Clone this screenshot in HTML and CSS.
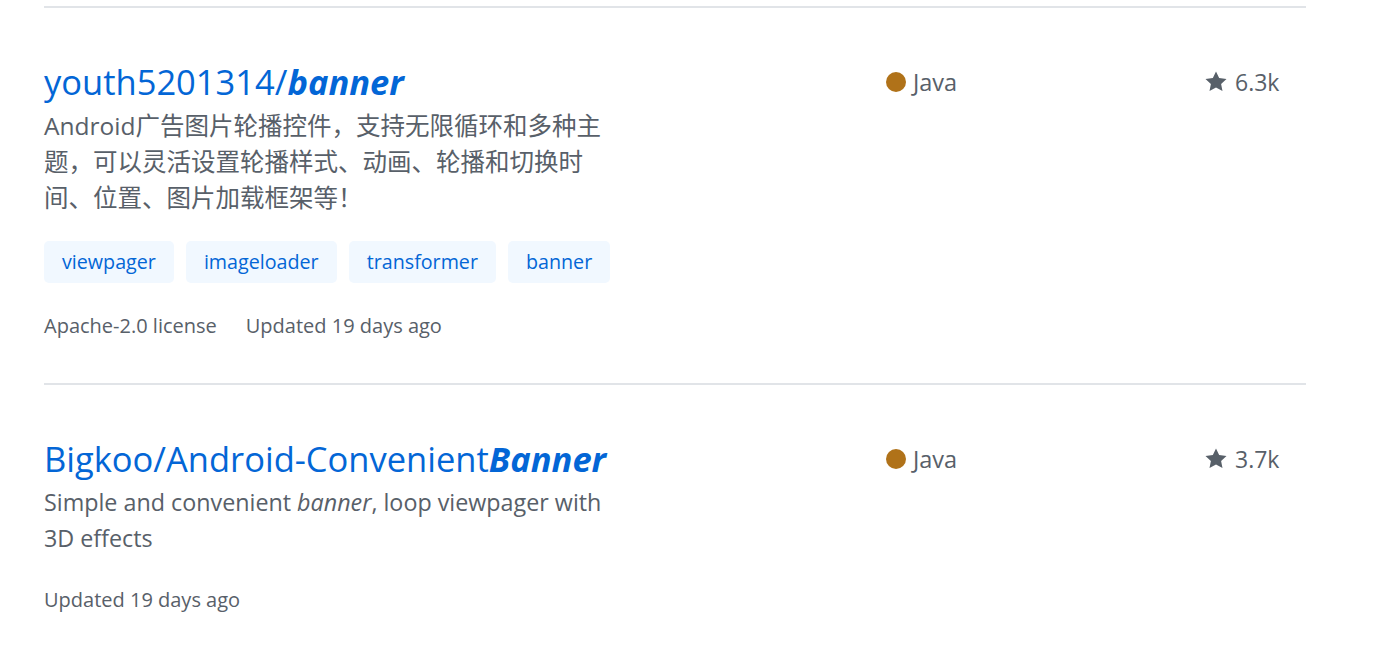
FILE: index.html
```html
<!DOCTYPE html>
<html lang="en">
  <head>
    <meta charset="UTF-8" />
    <meta name="viewport" content="width=device-width, initial-scale=1.0" />
    <title>Search results</title>
    <link rel="stylesheet" href="styles.css">
  </head>
  <body>
    <ul class="repo-list">
      <!-- youth5201314/banner -->
      <li class="repo-item">
        <div class="repo-main">
          <a class="repo-title" href="#">youth5201314/<em>banner</em></a>
          <p class="repo-desc zh" lang="zh">Android广告图片轮播控件，支持无限循环和多种主题，可以灵活设置轮播样式、动画、轮播和切换时间、位置、图片加载框架等！</p>
          <div class="topics">
            <a class="topic" href="#">viewpager</a>
            <a class="topic" href="#">imageloader</a>
            <a class="topic" href="#">transformer</a>
            <a class="topic" href="#">banner</a>
          </div>
          <div class="repo-meta">
            <span>Apache-2.0 license</span>
            <span>Updated 19 days ago</span>
          </div>
        </div>
        <div class="repo-lang"><span class="lang-dot"></span>Java</div>
        <div class="repo-stars">
          <svg class="star" viewBox="0 0 14 16" width="22" height="24"><path d="M14 6l-4.9-.64L7 1 4.9 5.36 0 6l3.6 3.26L2.670 14 7 11.67 11.33 14l-.93-4.74L14 6z"/></svg>
          6.3k
        </div>
      </li>

      <!-- Bigkoo/Android-ConvenientBanner -->
      <li class="repo-item">
        <div class="repo-main">
          <a class="repo-title" href="#">Bigkoo/Android-Convenient<em>Banner</em></a>
          <p class="repo-desc">Simple and convenient <i>banner</i>, loop viewpager with 3D effects</p>
          <div class="repo-meta">
            <span>Updated 19 days ago</span>
          </div>
        </div>
        <div class="repo-lang"><span class="lang-dot"></span>Java</div>
        <div class="repo-stars">
          <svg class="star" viewBox="0 0 14 16" width="22" height="24"><path d="M14 6l-4.9-.64L7 1 4.9 5.36 0 6l3.6 3.26L2.67 14 7 11.67 11.33 14l-.93-4.74L14 6z"/></svg>
          3.7k
        </div>
      </li>
    </ul>
  </body>
</html>
```

FILE: styles.css
```css
body {
  margin: 0;
  background: #fff;
  font-family: "Open Sans", "Noto Sans CJK SC", sans-serif;
  color: #586069;
}

.repo-list {
  list-style: none;
  margin: 0;
  padding: 0 0 0 44px;
  width: 1262px;
}

.repo-item {
  display: flex;
  border-top: 2px solid #e1e4e8;
  margin-top: 6px;
  padding: 49px 0 37px;
}

.repo-item + .repo-item {
  margin-top: 0;
}

.repo-main {
  width: 842px;
}

.repo-title {
  display: block;
  font-size: 34.5px;
  line-height: 50px;
  color: #0366d6;
  text-decoration: none;
}

.repo-title em {
  font-weight: bold;
}

.repo-desc {
  width: 570px;
  margin: 0 0 24px;
  font-size: 23.3px;
  line-height: 36px;
  color: #586069;
}

.repo-desc.zh {
  margin: 1px 0 25px;
  font-size: 24.5px;
}

.topics {
  display: flex;
  gap: 12px;
  margin-bottom: 23px;
}

.topic {
  padding: 0 18px;
  line-height: 42px;
  font-size: 19.7px;
  color: #0366d6;
  background: #f1f8ff;
  border-radius: 5px;
  text-decoration: none;
}

.repo-meta {
  display: flex;
  gap: 29px;
  font-size: 20px;
  line-height: 40px;
}

.repo-lang {
  width: 319px;
  display: flex;
  align-items: center;
  height: 50px;
  font-size: 23.5px;
}

.lang-dot {
  width: 20px;
  height: 20px;
  border-radius: 50%;
  background: #b07219;
  margin-right: 7px;
}

.repo-stars {
  display: flex;
  align-items: center;
  height: 50px;
  font-size: 23px;
}

.star {
  fill: #586069;
  margin-right: 8px;
}
```
